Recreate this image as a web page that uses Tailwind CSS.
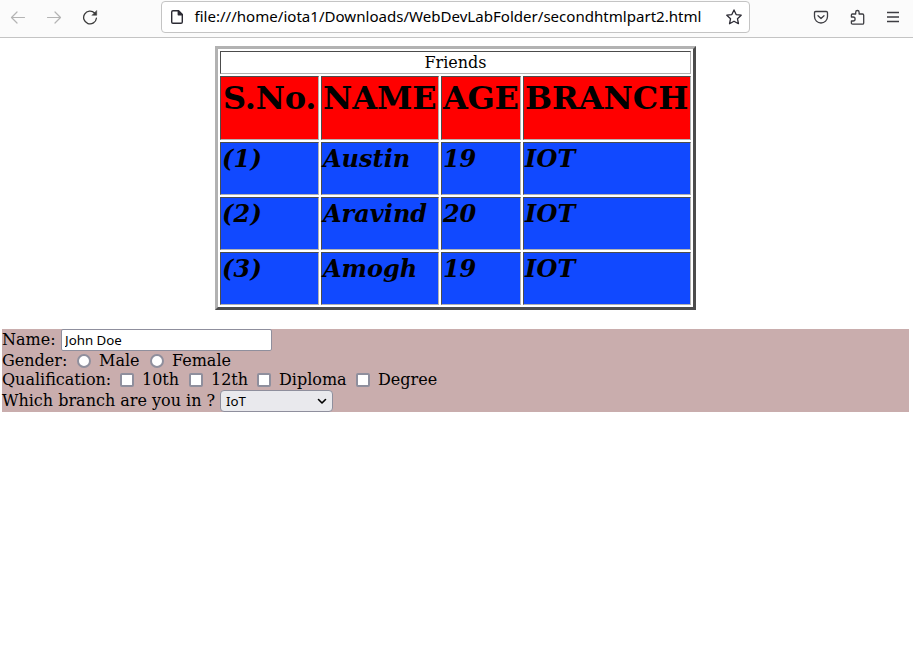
<!DOCTYPE html>
<html lang="en">
<head>
<meta charset="utf-8">
<title>Friends</title>
<script src="https://cdn.jsdelivr.net/npm/@tailwindcss/browser@4"></script>
</head>
<body class="w-[913px] h-[646px] overflow-hidden bg-white text-black font-['DejaVu_Serif',serif] text-[16px] leading-[19px]">
<header class="flex h-[38px] border-b border-[#c4c4c4] bg-[#fbfbfb] pt-[1px]">
  <nav class="flex items-center w-[161px] h-8 pl-[10px] gap-[20px] text-[#b4b4b4]">
    <svg class="w-4 h-4" viewBox="0 0 16 16" fill="none" stroke="currentColor" stroke-width="1.2" stroke-linecap="round" stroke-linejoin="round"><path d="M14.5 8.500H1.500M7 3L1.500 8.500L7 14"/></svg>
    <svg class="w-4 h-4" viewBox="0 0 16 16" fill="none" stroke="currentColor" stroke-width="1.2" stroke-linecap="round" stroke-linejoin="round"><path d="M1.500 8.500H14.500M9 3L14.500 8.500L9 14"/></svg>
    <svg class="w-4 h-4 text-[#3a3a3a]" viewBox="0 0 16 16" fill="none" stroke="currentColor" stroke-width="1.3" stroke-linecap="round"><path d="M12.600 4A6.400 6.400 0 1 0 14.400 9.200"/><path d="M14.700 1.800V6.300H10.200Z" fill="currentColor" stroke-width=".5" stroke-linejoin="round"/></svg>
  </nav>
  <div class="flex items-center w-[589px] h-[32px] rounded-[4px] border border-[#c4c4c4] bg-white pl-[7px] pr-[7px]">
    <svg class="w-4 h-4" viewBox="0 0 16 16" fill="none" stroke="#2b2a33" stroke-width="1.4" stroke-linejoin="round"><path d="M4 1.700H9.500L13.300 5.500V13Q13.300 14.300 12 14.300H4Q2.700 14.300 2.700 13V3Q2.700 1.700 4 1.700Z"/><path d="M9.300 1.800V5.700H13.200Z" fill="#2b2a33"/></svg>
    <svg class="ml-[9px] w-[510px] h-[28px]" viewBox="0 0 510 28"><text x="0.500" y="19" textLength="507" lengthAdjust="spacingAndGlyphs" class="font-['Noto_Sans',sans-serif] text-[14.5px]">file:///home/iota1/Downloads/WebDevLabFolder/secondhtmlpart2.html</text></svg>
    <svg class="ml-auto w-4 h-4" viewBox="0 0 16 16" fill="none" stroke="#2b2a33" stroke-width="1.3" stroke-linejoin="round"><path d="M8 .9L10.150 5.600L15.200 6.200L11.450 9.650L12.450 14.700L8 12.200L3.550 14.700L4.550 9.650L.8 6.200L5.850 5.600Z"/></svg>
  </div>
  <div class="flex items-center h-8 ml-[63px] gap-[20px]">
    <svg class="w-4 h-4" viewBox="0 0 16 16" fill="none" stroke="#3d3d42" stroke-width="1.3" stroke-linecap="round" stroke-linejoin="round"><path d="M2.800 2.500H13.200Q14.500 2.500 14.500 3.800V7.500A6.500 6.500 0 0 1 1.500 7.500V3.800Q1.500 2.500 2.800 2.500Z"/><path d="M5 6.800L8 9.600L11 6.800"/></svg>
    <svg class="w-4 h-4" viewBox="0 0 16 16" fill="none" stroke="#3d3d42" stroke-width="1.3" stroke-linejoin="round"><path d="M2.400 8V6Q2.400 5 3.400 5H6.700V3.200A1.700 1.700 0 0 1 10.100 3.200V5H13.500Q14.700 5 14.700 6.200V14Q14.700 15.200 13.500 15.200H3.600Q2.400 15.200 2.400 14V12H4.100A1.900 1.900 0 0 0 4.100 8Z"/></svg>
    <svg class="w-4 h-4" viewBox="0 0 16 16" fill="none" stroke="#3d3d42" stroke-width="1.300"><path d="M2 3.500H14M2 8H14M2 12.500H14"/></svg>
  </div>
</header>
<main>
  <section class="ml-[215px] mt-[8px] grid w-[481px] h-[264px] grid-cols-[99px_118px_80px_168px] grid-rows-[23px_64px_53px_53px_53px] gap-[2px] border-[3px] border-t-[#b2b2b2] border-l-[#b2b2b2] border-r-[#4c4c4c] border-b-[#4c4c4c] p-[2px] whitespace-nowrap
    *:border *:border-t-[#4c4c4c] *:border-l-[#4c4c4c] *:border-r-[#b2b2b2] *:border-b-[#b2b2b2]">
    <div class="col-span-4 text-center pt-[1px]">Friends</div>
    <h1 class="bg-[#ff0000] pl-[2px] text-[32px] leading-[38px] tracking-[-0.2px] font-bold pt-[2px]">S.No.</h1>
    <h1 class="bg-[#ff0000] pl-[1px] text-[32px] leading-[38px] tracking-[-0.1px] font-bold pt-[2px]">NAME</h1>
    <h1 class="bg-[#ff0000] pl-[1px] text-[32px] leading-[38px] tracking-[-0.3px] font-bold pt-[2px]">AGE</h1>
    <h1 class="bg-[#ff0000] pl-[1px] text-[32px] leading-[38px] font-bold pt-[2px]">BRANCH</h1>
    <h2 class="bg-[#1149ff] pl-[1px] text-[24px] leading-[28px] tracking-[0.2px] font-bold italic pt-[2px]">(1)</h2>
    <h2 class="bg-[#1149ff] pl-[1px] text-[24px] leading-[28px] font-bold italic pt-[2px]">Austin</h2>
    <h2 class="bg-[#1149ff] pl-[1px] text-[24px] leading-[28px] tracking-[-0.3px] font-bold italic pt-[2px]">19</h2>
    <h2 class="bg-[#1149ff] pl-[1px] text-[24px] leading-[28px] tracking-[0.2px] font-bold italic pt-[2px]">IOT</h2>
    <h2 class="bg-[#1149ff] pl-[1px] text-[24px] leading-[28px] tracking-[0.2px] font-bold italic pt-[2px]">(2)</h2>
    <h2 class="bg-[#1149ff] pl-[1px] text-[24px] leading-[28px] font-bold italic pt-[2px]">Aravind</h2>
    <h2 class="bg-[#1149ff] pl-[1px] text-[24px] leading-[28px] tracking-[-0.3px] font-bold italic pt-[2px]">20</h2>
    <h2 class="bg-[#1149ff] pl-[1px] text-[24px] leading-[28px] tracking-[0.2px] font-bold italic pt-[2px]">IOT</h2>
    <h2 class="bg-[#1149ff] pl-[1px] text-[24px] leading-[28px] tracking-[0.2px] font-bold italic pt-[2px]">(3)</h2>
    <h2 class="bg-[#1149ff] pl-[1px] text-[24px] leading-[28px] font-bold italic pt-[2px]">Amogh</h2>
    <h2 class="bg-[#1149ff] pl-[1px] text-[24px] leading-[28px] tracking-[-0.3px] font-bold italic pt-[2px]">19</h2>
    <h2 class="bg-[#1149ff] pl-[1px] text-[24px] leading-[28px] tracking-[0.2px] font-bold italic pt-[2px]">IOT</h2>
  </section>
  <form class="ml-[2px] mt-[19px] w-[907px] h-[83px] bg-[#c9adad] whitespace-nowrap">
    <div class="flex h-[22px]">
      <label class="w-[59px] pt-[1px]">Name:</label>
      <input value="John Doe" class="appearance-none w-[211px] h-[22px] rounded-[2px] border border-[#8f8f9d] bg-white px-[3px] font-['Noto_Sans',sans-serif] text-[13.3px]">
    </div>
    <div class="flex h-[19px]">
      <span class="w-[75px]">Gender:</span>
      <input type="radio" class="appearance-none w-[14px] h-[14px] mt-[3px] rounded-full border-2 border-[#8f8f9d] bg-white">
      <span class="w-[59px] pl-[8px]">Male</span>
      <input type="radio" class="appearance-none w-[14px] h-[14px] mt-[3px] rounded-full border-2 border-[#8f8f9d] bg-white">
      <span class="pl-[8px]">Female</span>
    </div>
    <div class="flex h-[20px]">
      <span class="w-[118px]">Qualification:</span>
      <input type="checkbox" class="appearance-none w-[14px] h-[14px] mt-[3px] rounded-[2px] border-2 border-[#8f8f9d] bg-white">
      <span class="w-[55px] pl-[8px]">10th</span>
      <input type="checkbox" class="appearance-none w-[14px] h-[14px] mt-[3px] rounded-[2px] border-2 border-[#8f8f9d] bg-white">
      <span class="w-[54px] pl-[8px]">12th</span>
      <input type="checkbox" class="appearance-none w-[14px] h-[14px] mt-[3px] rounded-[2px] border-2 border-[#8f8f9d] bg-white">
      <span class="w-[85px] pl-[8px]">Diploma</span>
      <input type="checkbox" class="appearance-none w-[14px] h-[14px] mt-[3px] rounded-[2px] border-2 border-[#8f8f9d] bg-white">
      <span class="pl-[8px]">Degree</span>
    </div>
    <div class="flex h-[22px]">
      <span class="w-[218px] pt-[1px]">Which branch are you in ?</span>
      <div class="flex items-center justify-between w-[113px] h-[22px] rounded-[4px] border border-[#8f8f9d] bg-[#e9e9ed] pl-[5px] pr-[5px] font-['Noto_Sans',sans-serif] text-[13.3px]">
        <span>IoT</span>
        <svg class="w-[10px] h-[10px]" viewBox="0 0 10 10" fill="none" stroke="#000" stroke-width="1.600" stroke-linecap="round" stroke-linejoin="round"><path d="M1.500 3.500L5 7L8.500 3.500"/></svg>
      </div>
    </div>
  </form>
</main>
</body>
</html>
